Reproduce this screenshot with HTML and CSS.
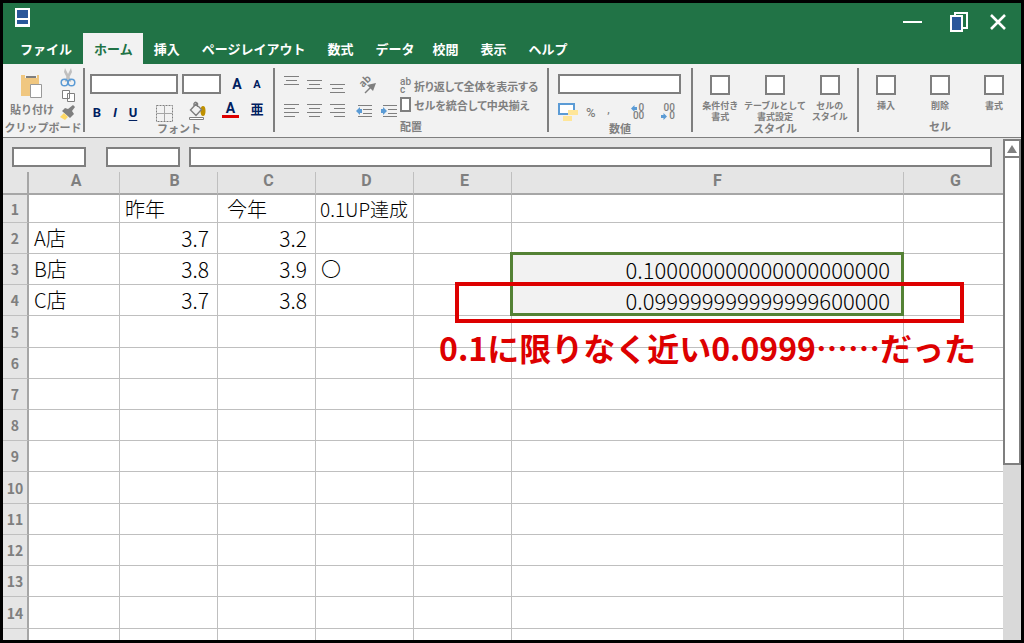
FILE: index.html
```
<!DOCTYPE html>
<html lang="ja">
<head>
<meta charset="utf-8">
<title>表計算</title>
<link rel="stylesheet" href="styles.css">
</head>
<body>
<div class="window">
  <header class="titlebar">
    <div class="title-row">
      <svg class="logo" width="15" height="19" viewBox="0 0 15 19" aria-hidden="true"><path fill="#fff" d="M0 0h15v19H0z"/><path fill="#2b579a" d="M2 2h11v8H2zM2 12h11v4H2z"/></svg>
      <div class="controls">
        <button type="button" aria-label="最小化"><svg width="25" height="20" viewBox="0 0 25 20"><path fill="#fff" d="M0 9h19v2H0z"/></svg></button>
        <button type="button" aria-label="元に戻す"><svg width="18" height="20" viewBox="0 0 18 20"><path fill="#217346" stroke="#fff" stroke-width="2" d="M5 1h12v15H5z"/><path fill="#2b579a" stroke="#fff" stroke-width="2" d="M1 4h11v15H1z"/></svg></button>
        <button type="button" aria-label="閉じる"><svg width="16" height="20" viewBox="0 0 16 20"><path stroke="#fff" stroke-width="2.6" d="M1 3l14 14M15 3L1 17"/></svg></button>
      </div>
    </div>
    <nav class="tabs">
      <button type="button">ファイル</button>
      <button type="button" class="active">ホーム</button>
      <button type="button">挿入</button>
      <button type="button">ページレイアウト</button>
      <button type="button">数式</button>
      <button type="button" class="tight">データ</button>
      <button type="button">校閲</button>
      <button type="button">表示</button>
      <button type="button">ヘルプ</button>
    </nav>
  </header>

  <div class="ribbon">
    <section class="group">
      <div class="tools clipboard">
        <button type="button" class="paste">
          <svg width="22" height="26" viewBox="0 0 22 26"><path fill="#f0c780" d="M0 2h18v21H0z"/><path fill="#f2f2f2" d="M4 0h12v5H4z"/><path fill="#7f7f7f" d="M5 3h10v2H5z"/><path fill="#fff" stroke="#999" d="M9.500 11.500h11v13h-11z"/></svg>
          <span>貼り付け</span>
        </button>
        <div class="clip-icons">
          <button type="button" aria-label="切り取り"><svg width="16" height="19" viewBox="0 0 16 19"><path fill="#bfbfbf" d="M5 0l3 6 3-6 1 4-2.500 5 2 4-1.500 1-2-3-2 3L4.500 13l2-4L4 4z"/><g fill="none" stroke="#5b9bd5" stroke-width="1.500"><circle cx="4.500" cy="14.500" r="3.300"/><circle cx="11.500" cy="14.500" r="3.300"/></g></svg></button>
          <button type="button" aria-label="コピー"><svg width="16" height="14" viewBox="0 0 16 14"><g fill="#fff" stroke="#7f7f7f"><path d="M2.500 1.500h7v8h-7zM7.500 4.500h7v8h-7z"/></g></svg></button>
          <button type="button" aria-label="書式のコピー"><svg width="16" height="16" viewBox="0 0 16 16"><path fill="#7f7f7f" d="M2 6l3-3 3 1 5-4 2 2-3 4 2 3-4 4z"/><path fill="#ffd966" d="M0 12l4-4 4 4-3 3z"/></svg></button>
        </div>
      </div>
      <h2>クリップボード</h2>
    </section>

    <section class="group">
      <div class="tools font">
        <div class="row">
          <input class="font-name" aria-label="フォント名"><input class="font-size" aria-label="フォントサイズ">
          <button type="button" class="navy grow" aria-label="拡大">A</button><button type="button" class="navy shrink" aria-label="縮小">A</button>
        </div>
        <div class="row styles">
          <button type="button" class="navy">B</button><button type="button" class="navy italic">I</button><button type="button" class="navy underline">U</button>
          <button type="button" class="wide first" aria-label="罫線"><svg width="17" height="17" viewBox="0 0 17 17" fill="none" stroke="#7f7f7f"><path stroke-dasharray="2 1" d="M.5.500h16v16H.5z"/><path stroke="#a6a6a6" d="M8.500 1v15M1 8.500h15"/></svg></button>
          <button type="button" class="wide" aria-label="塗りつぶし"><svg width="17" height="24" viewBox="0 0 17 24"><ellipse cx="14" cy="10" rx="2.500" ry="5" fill="#bf9000"/><path fill="#f2f2f2" stroke="#7f7f7f" stroke-width="1.400" d="M7 3l5.500 5.500-5.500 6L1.500 9zM5 6V2.500q1.500-2.500 3.500 0V6"/><path fill="#fff" stroke="#7f7f7f" d="M.5 16.500h14v2H.5z"/></svg></button>
          <button type="button" class="navy wide"><span class="font-color">A</span></button>
          <button type="button" class="navy ruby">亜</button>
        </div>
      </div>
      <h2>フォント</h2>
    </section>

    <section class="group">
      <div class="tools alignment">
        <div class="align-icons">
          <button type="button" aria-label="上揃え"><svg width="16" height="20" viewBox="0 0 16 20" stroke="#7f7f7f"><path d="M0 2.500h15M2 6.500h11M0 10.500h15"/></svg></button>
          <button type="button" aria-label="上下中央揃え"><svg width="16" height="20" viewBox="0 0 16 20" stroke="#7f7f7f"><path d="M0 6.500h15M2 10.500h11M0 14.500h15"/></svg></button>
          <button type="button" aria-label="下揃え"><svg width="16" height="20" viewBox="0 0 16 20" stroke="#7f7f7f"><path d="M0 10.500h15M2 14.500h11M0 18.500h15"/></svg></button>
          <button type="button" aria-label="方向"><svg width="22" height="20" viewBox="0 0 22 20"><text class="ab" x="7" y="14" transform="rotate(-45 7 14)">ab</text><path stroke="#7f7f7f" stroke-width="1.500" d="M9 19l7-7"/><path fill="#7f7f7f" d="M20 9l-9 2 6 6z"/></svg></button>
          <span></span>
          <button type="button" aria-label="左揃え"><svg width="16" height="14" viewBox="0 0 16 14" stroke="#7f7f7f"><path d="M0 .5h15M0 4.500h11M0 8.500h15M0 12.500h11"/></svg></button>
          <button type="button" aria-label="中央揃え"><svg width="16" height="14" viewBox="0 0 16 14" stroke="#7f7f7f"><path d="M0 .5h15M2 4.500h11M0 8.500h15M2 12.500h11"/></svg></button>
          <button type="button" aria-label="右揃え"><svg width="16" height="14" viewBox="0 0 16 14" stroke="#7f7f7f"><path d="M0 .5h15M4 4.500h11M0 8.500h15M4 12.500h11"/></svg></button>
          <button type="button" aria-label="インデントを減らす"><svg width="17" height="14" viewBox="0 0 17 14" stroke="#7f7f7f"><path d="M2 1.500h14M7 5.500h9M7 9.500h9M2 12.500h14"/><path stroke="none" fill="#5b9bd5" d="M0 7l4-4v2h2v4H4v2z"/></svg></button>
          <button type="button" aria-label="インデントを増やす"><svg width="17" height="14" viewBox="0 0 17 14" stroke="#7f7f7f"><path d="M2 1.500h14M7 5.500h9M7 9.500h9M2 12.500h14"/><path stroke="none" fill="#5b9bd5" d="M6 7L2 3v2H0v4h2v2z"/></svg></button>
        </div>
        <div class="align-labels">
          <button type="button"><span class="abc">ab<br>c</span>折り返して全体を表示する</button>
          <button type="button"><span class="merge"></span>セルを統合して中央揃え</button>
        </div>
      </div>
      <h2>配置</h2>
    </section>

    <section class="group">
      <div class="tools number">
        <input class="number-format" aria-label="表示形式">
        <div class="row numbers">
          <button type="button" aria-label="通貨"><svg width="20" height="19" viewBox="0 0 20 19"><path fill="#fff" stroke="#5b9bd5" stroke-width="2" d="M1 1h15v10H1z"/><path fill="#ffe699" d="M10 7h10v5H10zM5 13h9v5H5z"/></svg></button>
          <button type="button" class="percent">%</button>
          <button type="button" class="comma">,</button>
          <button type="button" class="decimals"><span><svg width="6" height="7" viewBox="0 0 6 7"><path fill="#5b9bd5" d="M0 3.500L3.500 0v2H6v3H3.500v2z"/></svg> 0</span><span>00</span></button>
          <button type="button" class="decimals"><span>00</span><span><svg width="6" height="7" viewBox="0 0 6 7"><path fill="#5b9bd5" d="M6 3.500L2.500 0v2H0v3h2.500v2z"/></svg> 0</span></button>
        </div>
      </div>
      <h2>数値</h2>
    </section>

    <section class="group">
      <div class="tools tiles">
        <button type="button"><i></i><span>条件付き<br>書式</span></button>
        <button type="button"><i></i><span>テーブルとして<br>書式設定</span></button>
        <button type="button"><i></i><span>セルの<br>スタイル</span></button>
      </div>
      <h2>スタイル</h2>
    </section>

    <section class="group">
      <div class="tools tiles">
        <button type="button"><i></i><span>挿入</span></button>
        <button type="button"><i></i><span>削除</span></button>
        <button type="button"><i></i><span>書式</span></button>
      </div>
      <h2>セル</h2>
    </section>
  </div>

  <main class="work">
    <div class="sheet">
      <div class="formula-bar">
        <input class="name-box" aria-label="名前ボックス">
        <input class="name-box" aria-label="関数">
        <input class="formula" aria-label="数式バー">
      </div>
      <table class="grid">
        <colgroup><col class="col-head"><col class="col-a"><col class="col-std"><col class="col-std"><col class="col-std"><col class="col-std"><col><col class="col-g"></colgroup>
        <thead>
          <tr><th></th><th scope="col">A</th><th scope="col" class="shift">B</th><th scope="col">C</th><th scope="col">D</th><th scope="col">E</th><th scope="col" class="shift-far">F</th><th scope="col">G</th></tr>
        </thead>
        <tbody>
          <tr class="short"><th scope="row">1</th><td></td><td>昨年</td><td class="indent">今年</td><td class="compact">0.1UP達成</td><td></td><td></td><td></td></tr>
          <tr><th scope="row">2</th><td>A店</td><td class="num">3.7</td><td class="num">3.2</td><td></td><td></td><td></td><td></td></tr>
          <tr><th scope="row">3</th><td>B店</td><td class="num">3.8</td><td class="num">3.9</td><td>〇</td><td></td><td class="picked">0.100000000000000000000<div class="selection"></div></td><td></td></tr>
          <tr><th scope="row">4</th><td>C店</td><td class="num">3.7</td><td class="num">3.8</td><td></td><td></td><td class="picked">0.099999999999999600000<div class="callout"><div class="callout-box"></div><p>0.1に限りなく近い0.0999……だった</p></div></td><td></td></tr>
          <tr class="tall"><th scope="row">5</th><td></td><td></td><td></td><td></td><td></td><td></td><td></td></tr>
          <tr><th scope="row">6</th><td></td><td></td><td></td><td></td><td></td><td></td><td></td></tr>
          <tr><th scope="row">7</th><td></td><td></td><td></td><td></td><td></td><td></td><td></td></tr>
          <tr><th scope="row">8</th><td></td><td></td><td></td><td></td><td></td><td></td><td></td></tr>
          <tr><th scope="row">9</th><td></td><td></td><td></td><td></td><td></td><td></td><td></td></tr>
          <tr class="tall"><th scope="row">10</th><td></td><td></td><td></td><td></td><td></td><td></td><td></td></tr>
          <tr><th scope="row">11</th><td></td><td></td><td></td><td></td><td></td><td></td><td></td></tr>
          <tr><th scope="row">12</th><td></td><td></td><td></td><td></td><td></td><td></td><td></td></tr>
          <tr><th scope="row">13</th><td></td><td></td><td></td><td></td><td></td><td></td><td></td></tr>
          <tr class="tall"><th scope="row">14</th><td></td><td></td><td></td><td></td><td></td><td></td><td></td></tr>
          <tr><th></th><td></td><td></td><td></td><td></td><td></td><td></td><td></td></tr>
        </tbody>
      </table>
    </div>
    <div class="scrollbar">
      <button type="button" aria-label="上へ"><svg width="10" height="8" viewBox="0 0 10 8"><path fill="#7f7f7f" d="M5 0l5 8H0z"/></svg></button>
      <div class="thumb"></div>
      <div class="track"></div>
    </div>
  </main>
</div>
</body>
</html>
```
FILE: styles.css
```
* { box-sizing: border-box; }

body {
  margin: 0;
  font-family: "Noto Sans CJK JP", sans-serif;
  color: #000;
}

button {
  margin: 0;
  padding: 0;
  border: 0;
  background: none;
  color: inherit;
  font: inherit;
}

input {
  min-width: 0;
  height: 20px;
  padding: 0 4px;
  border: 2px solid #7f7f7f;
  border-radius: 0;
  background: #fff;
  font: inherit;
}

svg { display: block; overflow: visible; }

.window {
  display: flex;
  flex-direction: column;
  height: 100vh;
  border: 3px solid #000;
  background: #fff;
}

/* Title bar and tabs */
.titlebar {
  flex: none;
  background: #217346;
  color: #fff;
}

.title-row {
  display: flex;
  justify-content: space-between;
  height: 30px;
  padding: 5px 15px 0 12px;
}

.controls {
  display: flex;
  gap: 22px;
  padding-top: 4px;
}

.controls button { height: 20px; }

.tabs {
  display: flex;
  height: 31px;
  padding-left: 6px;
  font-size: 13px;
  font-weight: bold;
}

.tabs button { padding: 0 11px; white-space: nowrap; }
.tabs .tight { padding-right: 7px; }
.tabs .active { padding: 0 10px 0 11px; background: #f2f2f2; color: #217346; }

/* Ribbon */
.ribbon {
  flex: none;
  display: grid;
  grid-template-columns: 82fr 190fr 274fr 144fr 166fr 162fr;
  height: 74px;
  padding: 4px 0 5px;
  border-bottom: 1px solid #7f7f7f;
  background: #f2f2f2;
  color: #7f7f7f;
  font-size: 11px;
  font-weight: bold;
}

.group {
  display: flex;
  flex-direction: column;
  min-width: 0;
  height: 64px;
  border-right: 2px solid #7f7f7f;
}

.group:last-child { border-right: 0; }

.group h2 {
  margin: 0;
  font-size: 11px;
  line-height: 12px;
  text-align: center;
  white-space: nowrap;
}

.tools { height: 54px; }
.row { display: flex; align-items: center; }
.navy { color: #002060; font-family: Roboto, "Noto Sans CJK JP", sans-serif; }

.clipboard { display: flex; gap: 5px; padding-left: 6px; }
.paste { display: flex; flex-direction: column; align-items: center; gap: 4px; padding-top: 5px; width: 46px; }
.paste span { line-height: 12px; white-space: nowrap; }
.clip-icons { display: flex; flex-direction: column; gap: 2px; }

.font { padding: 6px 0 0 5px; }
.font-name { width: 88px; }
.font-size { width: 39px; margin: 0 6px 0 4px; }
.grow { width: 20px; font-size: 14px; }
.shrink { width: 20px; font-size: 11px; }
.styles { height: 30px; margin-left: -2px; padding-top: 8px; font-size: 13px; }
.styles button { width: 18px; line-height: 18px; }
.styles .wide { width: 33px; display: flex; justify-content: center; }
.styles .first { margin-left: 6px; }
.styles .ruby { width: 20px; margin-bottom: 6px; }
.italic { font-style: italic; }
.underline { text-decoration: underline; text-underline-offset: 3px; }
.font-color { width: 17px; margin-bottom: 6px; border-bottom: 3px solid #d00; line-height: 13px; font-size: 14px; }

.alignment { display: flex; gap: 2px; padding: 6px 0 0 9px; }
.align-icons {
  display: grid;
  grid-template-columns: 23px 23px 26px 25px 17px;
  grid-template-rows: 30px 16px;
  align-items: start;
}
.ab { font-size: 10px; fill: #7f7f7f; }
.align-labels { padding-top: 2px; font-feature-settings: "palt"; }
.align-labels button { display: flex; align-items: center; gap: 2px; height: 19px; white-space: nowrap; }
.abc { width: 12px; font-family: Roboto, sans-serif; font-size: 10px; font-weight: 500; line-height: 8px; text-align: left; }
.merge { width: 11px; height: 15px; margin-right: 1px; border: 2px solid #7f7f7f; background: #fff; }

.number { padding: 6px 10px 0 9px; }
.number-format { display: block; width: 100%; }
.numbers { gap: 8px; height: 30px; padding-top: 6px; font-family: Roboto, sans-serif; font-weight: 500; }
.percent { font-size: 13px; }
.comma { width: 10px; margin-bottom: 6px; }
.decimals { margin-left: 9px; }
.decimals span { display: flex; align-items: center; justify-content: flex-end; gap: 2px; line-height: 8px; font-size: 10px; }

.tiles {
  display: grid;
  grid-template-columns: repeat(3, 1fr);
  padding-top: 7px;
  font-size: 9px;
  line-height: 11px;
}
.tiles button { display: flex; flex-direction: column; align-items: center; gap: 5px; min-width: 0; white-space: nowrap; }
.tiles i { width: 20px; height: 20px; border: 2px solid #7f7f7f; background: #fff; }

/* Sheet */
.work { flex: 1; display: flex; min-height: 0; background: #e5e5e5; }
.sheet { flex: 1; min-width: 0; overflow: hidden; }

.formula-bar { display: flex; height: 34px; padding: 9px 11px 0 9px; }
.name-box { width: 74px; margin-right: 20px; }
.name-box + .name-box { margin-right: 9px; }
.formula { flex: 1; }

.grid {
  width: 100%;
  table-layout: fixed;
  border-collapse: separate;
  border-spacing: 0;
  background: #fff;
  font-size: 20px;
  font-weight: 300;
}

.col-head { width: 26px; }
.col-a { width: 91px; }
.col-std { width: 98px; }
.col-g { width: 99px; }

.grid th, .grid td {
  padding: 0 8px 0 5px;
  border: solid #bfbfbf;
  border-width: 0 1px 1px 0;
  line-height: 20px;
  white-space: nowrap;
}

.grid th { padding: 0; background: #e5e5e5; color: #7f7f7f; font-size: 14px; font-weight: bold; }
.grid th:first-child { border-right: 2px solid #a6a6a6; }
.grid thead th { height: 23px; padding: 0 0 3px 4px; border-bottom: 2px solid #a6a6a6; font-family: Roboto, sans-serif; font-size: 16px; line-height: 18px; }
.grid thead .shift { padding-left: 12px; }
.grid thead .shift-far { padding-left: 20px; }
.grid tr > :last-child { border-right: 0; }
.grid tbody tr { height: 31px; }
.grid tbody .short { height: 28px; }
.grid tbody .tall { height: 32px; }
.grid .indent { padding-left: 9px; }
.grid .compact { padding: 0 0 0 4px; font-size: 19px; }
.grid .num { text-align: right; font-size: 21px; }
.grid .picked { position: relative; padding-right: 13px; background: #f2f2f2; text-align: right; font-size: 22px; }

.selection { position: absolute; inset: -2px -1px -32px -2px; z-index: 1; border: 3px solid #548235; }
.callout { position: absolute; top: -3px; left: -57px; right: -61px; z-index: 2; color: #d00; }
.callout-box { height: 41px; border: 4px solid #d00; }
.callout p { display: flex; justify-content: center; margin: 0 -16px 0 -20px; font-size: 32px; font-weight: bold; line-height: 48px; }

/* Scrollbar */
.scrollbar { display: flex; flex-direction: column; width: 18px; padding-top: 1px; background: #e5e5e5; }
.scrollbar button { display: flex; align-items: center; justify-content: center; height: 17px; border: 2px solid #7f7f7f; border-bottom: 0; background: #fff; }
.thumb { flex: 308; border: 2px solid #7f7f7f; background: #fff; }
.track { flex: 176; background: #d9d9d9; }
```
